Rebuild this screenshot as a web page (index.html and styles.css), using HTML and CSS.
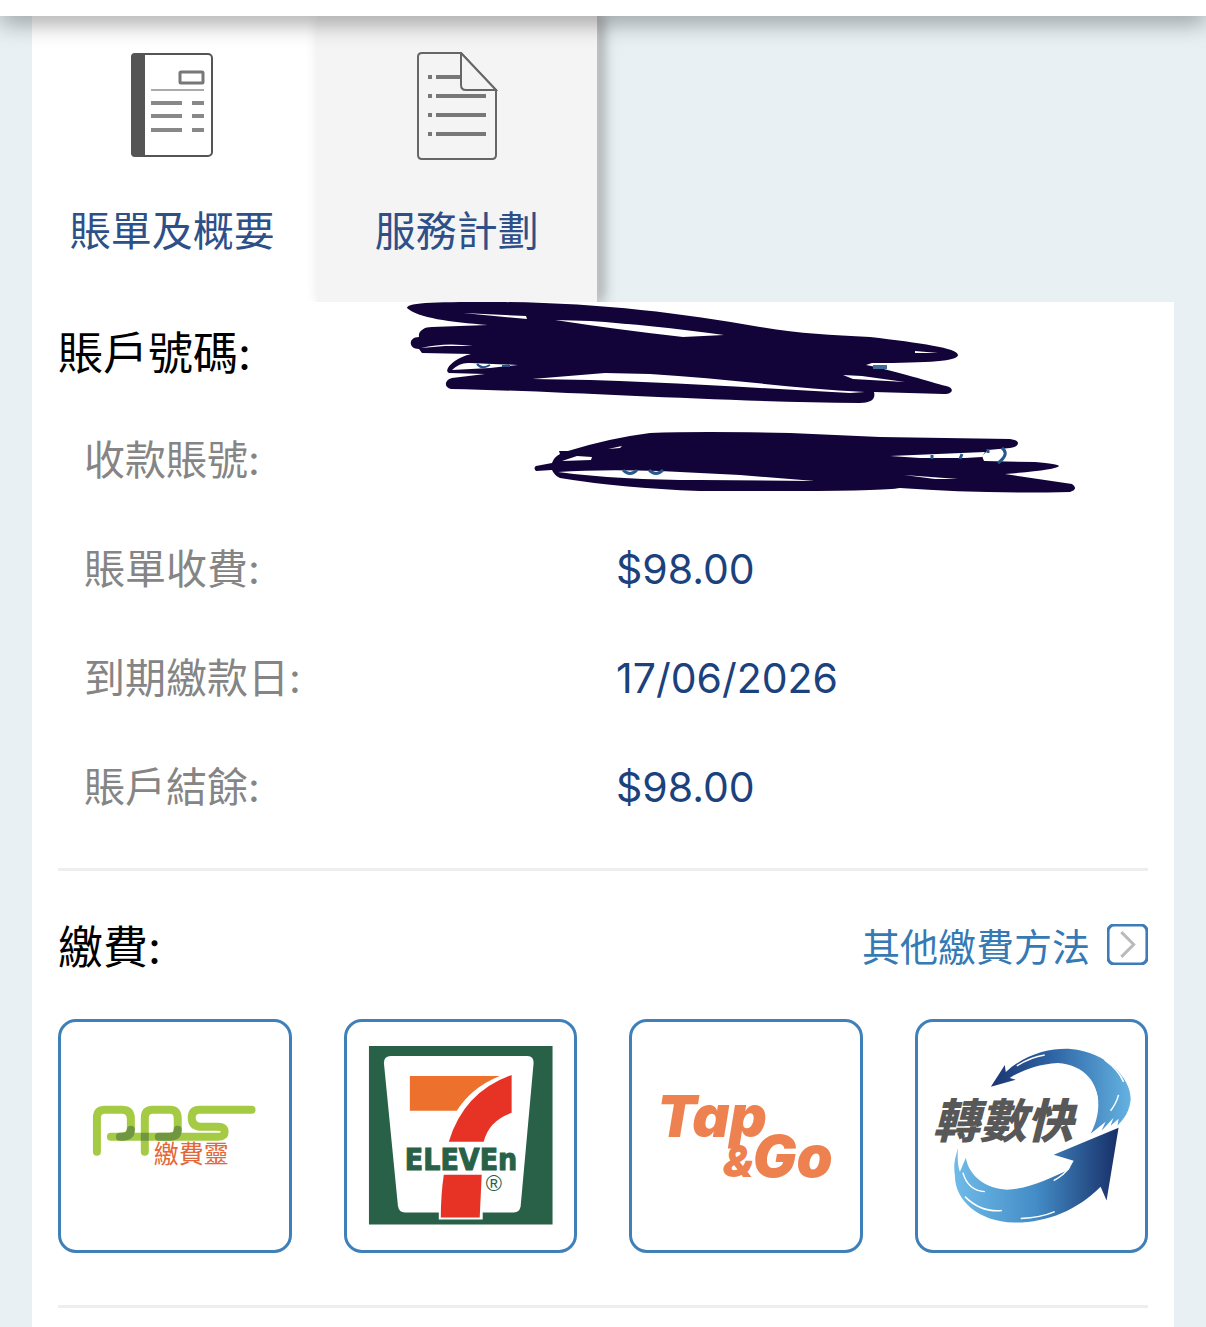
FILE: index.html
```html
<!DOCTYPE html>
<html lang="zh-Hant">
<head>
  <meta charset="UTF-8">
  <meta name="viewport" content="width=device-width, initial-scale=1.0">
  <title>賬單及概要</title>
  <link rel="stylesheet" href="styles.css">
</head>
<body>

  <header class="topbar"></header>

  <main class="page">
    <nav class="tabs">
      <button type="button" class="tab tab-active">
        <svg class="tab-icon" viewBox="0 0 82 108" aria-hidden="true">
          <rect x="1" y="2" width="80" height="102" rx="4" fill="#fff" stroke="#555" stroke-width="2"/>
          <path d="M14 1H4Q0 1 0 5v96q0 4 4 4h10z" fill="#555"/>
          <rect x="49" y="20" width="23" height="11" rx="1" fill="#fff" stroke="#777" stroke-width="3"/>
          <path d="M20 38h53" stroke="#aaa" stroke-width="2"/>
          <path d="M20 51h31M61 51h12M20 64h31M61 64h12M20 78h31M61 78h12" stroke="#888" stroke-width="4"/>
        </svg>
        <span class="tab-label">賬單及概要</span>
      </button>
      <button type="button" class="tab">
        <svg class="tab-icon" viewBox="0 0 82 108" aria-hidden="true">
          <path d="M45 1H6Q2 1 2 5v98q0 4 4 4h70q4 0 4-4V38z" fill="#f4f4f4" stroke="#666" stroke-width="2"/>
          <path d="M45 1v32q0 5 5 5h30z" fill="#f4f4f4" stroke="#666" stroke-width="2"/>
          <path d="M12 25h4M20 25h24M12 44h4M20 44h50M12 63h4M20 63h50M12 82h4M20 82h50" stroke="#777" stroke-width="4"/>
        </svg>
        <span class="tab-label">服務計劃</span>
      </button>
    </nav>

    <section class="panel">
      <h2 class="title">賬戶號碼:</h2>
      <dl class="details">
        <div class="row"><dt>收款賬號:</dt><dd></dd></div>
        <div class="row"><dt>賬單收費:</dt><dd>$98.00</dd></div>
        <div class="row"><dt>到期繳款日:</dt><dd>17/06/2026</dd></div>
        <div class="row"><dt>賬戶結餘:</dt><dd>$98.00</dd></div>
      </dl>

      <!-- hides both account numbers -->
      <svg class="redact" viewBox="406 302 672 192" aria-hidden="true">
        <path fill="#120338" d="M407 308C407 302 440 302 500 302C600 303 680 313 760 327C800 334 830 335 870 337C920 343 958 348 958 355C958 361 930 363 872 363L866 365C900 372 930 382 946 386C955 388 953 394 944 394L874 392C876 400 870 403 860 403C720 402 560 391 451 389C444 388 444 380 452 378L485 374L449 373C444 371 450 363 460 358Q466 355 471 354L422 353L419 349C408 349 408 337 419 337C418 331 424 327 432 327L488 325C450 322 418 318 407 308Z"/>
        <g fill="#fff">
          <path d="M463 313L526 316L527 319Z"/>
          <path d="M555 320L590 321Q650 325 724 335L683 337Q620 330 555 320Z"/>
          <path d="M532 379L605 373L650 374C720 378 790 388 865 392L850 393C740 387 640 380 532 379Z"/>
          <path d="M421 348Q445 342 473 346L445 346Z"/>
          <path d="M452 370Q460 362 470 363L518 365L490 368Z"/>
          <path d="M843 375L862 376L905 382L853 379Z"/>
          <path d="M915 351L938 353L915 353Z"/>
        </g>
        <path d="M477 364q5 6 13 1M502 366h8" fill="none" stroke="#1f4f86" stroke-width="2"/>
        <path d="M873 367h14" stroke="#3d6b9a" stroke-width="4"/>

        <path fill="#120338" d="M536 466L552 463Q554 457 560 454L559 451L568 451Q610 438 650 433Q700 431 790 433L880 437L1010 439Q1018 440 1018 443Q1018 447 1010 448L988 450L982 456L984 461L1035 462Q1058 464 1059 466Q1056 470 1005 474L1072 484Q1079 489 1070 492Q980 494 900 488Q885 491 780 491L700 491Q620 488 560 478Q554 475 552 470L536 471Q533 468 536 466Z"/>
        <g fill="#fff">
          <path d="M558 472Q600 469 660 471L740 475L815 481L700 480Q620 480 558 472Z"/>
          <path d="M562 461L577 456L592 457L591 460Z"/>
          <path d="M608 449L622 446L620 448Z"/>
          <path d="M904 475L958 479L935 479Z"/>
          <path d="M890 456L985 452L982 457L965 458L920 458Z"/>
        </g>
        <path d="M623 470q7 7 14 0M649 470q7 7 14 0M932 455v4M962 454l-2 5M988 453v-4M1002 448q8 6-4 15" fill="none" stroke="#27598c" stroke-width="3"/>
      </svg>

      <hr class="line">

      <div class="pay-head">
        <h2 class="pay-title">繳費:</h2>
        <a class="more" href="#">
          <span>其他繳費方法</span>
          <svg class="more-icon" viewBox="0 0 40 40" aria-hidden="true">
            <rect x="1" y="1" width="38" height="38" rx="6" fill="none" stroke="#3e7cb5" stroke-width="3"/>
            <path d="M14 8l12 12-12 12" fill="none" stroke="#bbb" stroke-width="3"/>
          </svg>
        </a>
      </div>

      <div class="methods">
        <a class="method" href="#" aria-label="PPS 繳費靈">
          <svg viewBox="11 12 228 228">
            <g fill="none" stroke="#a4cb43" stroke-width="8" stroke-linecap="round">
              <path d="M47 142V108q0-8 8-8h17q9 0 9 9v9q0 9-9 9"/>
              <path d="M95 142V108q0-8 8-8h17q8 0 8 9v9q0 9-8 9"/>
              <path d="M202 100H150q-8 0-8 8t8 9h18q7 0 7 5t-7 5H61"/>
            </g>
            <path d="M81 120q0 7-9 7h-2M128 120q0 7-8 7h-11" fill="none" stroke="#719642" stroke-width="8" stroke-linecap="round"/>
            <path d="M91 123h8v8h-8z" fill="#719642"/>
            <text class="logo-pps" x="104" y="153">繳費靈</text>
          </svg>
        </a>
        <a class="method" href="#" aria-label="7-Eleven">
          <svg viewBox="11 12 228 228">
            <path d="M33 36h184v179H33z" fill="#286147"/>
            <path d="M55 46H192q6 0 6 7L185 197q-1 6-7 6H69q-6 0-7-7L48 53q0-7 7-7z" fill="#fff"/>
            <path d="M74 66H164Q135 78 121 101H74z" fill="#ed702d"/>
            <path d="M176 65V103Q153 111 148 132H113Q128 82 176 65z" fill="#e63325"/>
            <path d="M103 164h44v46h-44z" fill="#fff"/>
            <path d="M108 165H146L144 208H105Q105 185 108 165z" fill="#e63325"/>
            <text class="logo-eleven" x="69" y="160">ELEVEn</text>
            <text class="logo-reg" x="150" y="181">®</text>
          </svg>
        </a>
        <a class="method" href="#" aria-label="Tap &amp; Go">
          <svg viewBox="11 12 228 228">
            <text class="logo-tap" x="36" y="127">Tap</text>
            <text class="logo-amp" x="102" y="167">&amp;</text>
            <text class="logo-tap" x="132" y="167">Go</text>
          </svg>
        </a>
        <a class="method" href="#" aria-label="轉數快">
          <svg viewBox="11 12 228 228">
            <defs>
              <linearGradient id="arrowTop">
                <stop offset="0" stop-color="#1b3570"/>
                <stop offset=".45" stop-color="#2e66a6"/>
                <stop offset="1" stop-color="#64b2e2"/>
              </linearGradient>
              <linearGradient id="arrowBottom">
                <stop offset="0" stop-color="#6fbbe8"/>
                <stop offset=".5" stop-color="#438cc6"/>
                <stop offset="1" stop-color="#182f68"/>
              </linearGradient>
            </defs>
            <path fill="url(#arrowTop)" d="M84 77L98 55L99 62C120 43 145 38 164 39C202 42 226 71 224 91C222 106 214 112 211 116L212 109L204 116L207 108L195 121L199 112L184 124C200 94 192 56 151 53C130 54 112 62 103 68L109 70Z"/>
            <path fill="url(#arrowBottom)" d="M147 145L212 118L200 191L194 177C170 201 140 213 107 213C72 212 48 191 48 166C46 153 49 147 51 138Q50 155 53 162L59 148C62 167 80 179 100 180C124 179 144 168 162 160L167 151Z"/>
            <path d="M110 56Q124 47 138 45M174 62Q190 75 191 92M198 50Q212 60 217 72M56 163Q61 181 78 182M58 187Q74 203 95 201M147 171Q158 165 163 157M114 209Q134 208 148 202M204 101Q210 93 212 85" fill="none" stroke="#fff" stroke-width="1.5"/>
            <text class="logo-fps" x="26" y="128">轉數快</text>
          </svg>
        </a>
      </div>

      <hr class="line">
    </section>
  </main>

</body>
</html>
```

FILE: styles.css
```css
* {
  box-sizing: border-box;
}

body {
  margin: 0;
  background: #e8f0f4;
  font-family: Inter, "Noto Sans CJK TC", sans-serif;
  color: #000;
}

h2, dl, dd {
  margin: 0;
  font-weight: 400;
}

a {
  color: #3579b5;
  text-decoration: none;
}

.topbar {
  position: relative;
  z-index: 2;
  height: 16px;
  background: #fff;
  box-shadow: 0 4px 24px rgba(0, 0, 0, 0.5);
}

.page {
  padding: 0 32px;
}

/* tabs */
.tabs {
  display: flex;
  width: 565px;
  max-width: 100%;
  background: #fff;
  box-shadow: 4px 0 14px rgba(0, 0, 0, 0.5);
  clip-path: inset(0 -30px 0 0);
}

.tab {
  flex: 1;
  display: flex;
  flex-direction: column;
  align-items: center;
  gap: 41px;
  height: 286px;
  padding: 36px 0 0;
  border: 0;
  background: #f4f4f4;
  box-shadow: 0 0 12px #e8e8e8;
  color: #2e5088;
  font-family: inherit;
  font-size: 41px;
  line-height: 60px;
}

.tab-active {
  padding-right: 4px;
  background: #fff;
  box-shadow: none;
}

.tab-icon {
  width: 82px;
  height: 108px;
}

/* bill details */
.panel {
  position: relative;
  z-index: 1;
  padding: 0 26px 20px;
  background: #fff;
}

.title, .pay-title {
  font-size: 45px;
}

.title {
  line-height: 104px;
}

.row {
  display: grid;
  grid-template-columns: 1fr 1fr;
  height: 109px;
  padding-left: 26px;
  font-size: 41px;
  line-height: 109px;
}

.row dt {
  color: #858585;
}

.row dd {
  color: #1b427c;
}

.redact {
  position: absolute;
  top: 0;
  left: 374px;
  width: 672px;
  height: 192px;
}

.line {
  height: 3px;
  margin: 26px 0 0;
  border: 0;
  background: #eee;
}

/* payment methods */
.pay-head {
  display: flex;
  align-items: center;
  justify-content: space-between;
  height: 148px;
  padding-bottom: 2px;
}

.more {
  display: flex;
  align-items: center;
  gap: 17px;
  font-size: 38px;
}

.more-icon {
  width: 41px;
  height: 41px;
}

.methods {
  display: grid;
  grid-template-columns: repeat(4, 1fr);
  gap: 52px;
}

.method {
  border: 3px solid #4080b8;
  border-radius: 18px;
}

.method svg {
  display: block;
  width: 100%;
}

.methods + .line {
  margin-top: 52px;
}

.logo-pps {
  font-size: 25px;
  fill: #e2683a;
}

.logo-eleven {
  font-family: "DejaVu Sans Condensed", "DejaVu Sans", sans-serif;
  font-size: 30px;
  font-weight: 700;
  fill: #286147;
  stroke: #286147;
  stroke-width: 1px;
}

.logo-reg {
  font-family: "Liberation Sans", sans-serif;
  font-size: 22px;
  fill: #286147;
}

.logo-tap, .logo-amp {
  font-size: 58px;
  font-style: italic;
  font-weight: 900;
  fill: #ee8150;
}

.logo-amp {
  font-size: 44px;
}

.logo-fps {
  font-size: 47px;
  font-style: italic;
  font-weight: 900;
  fill: #585858;
}
```
